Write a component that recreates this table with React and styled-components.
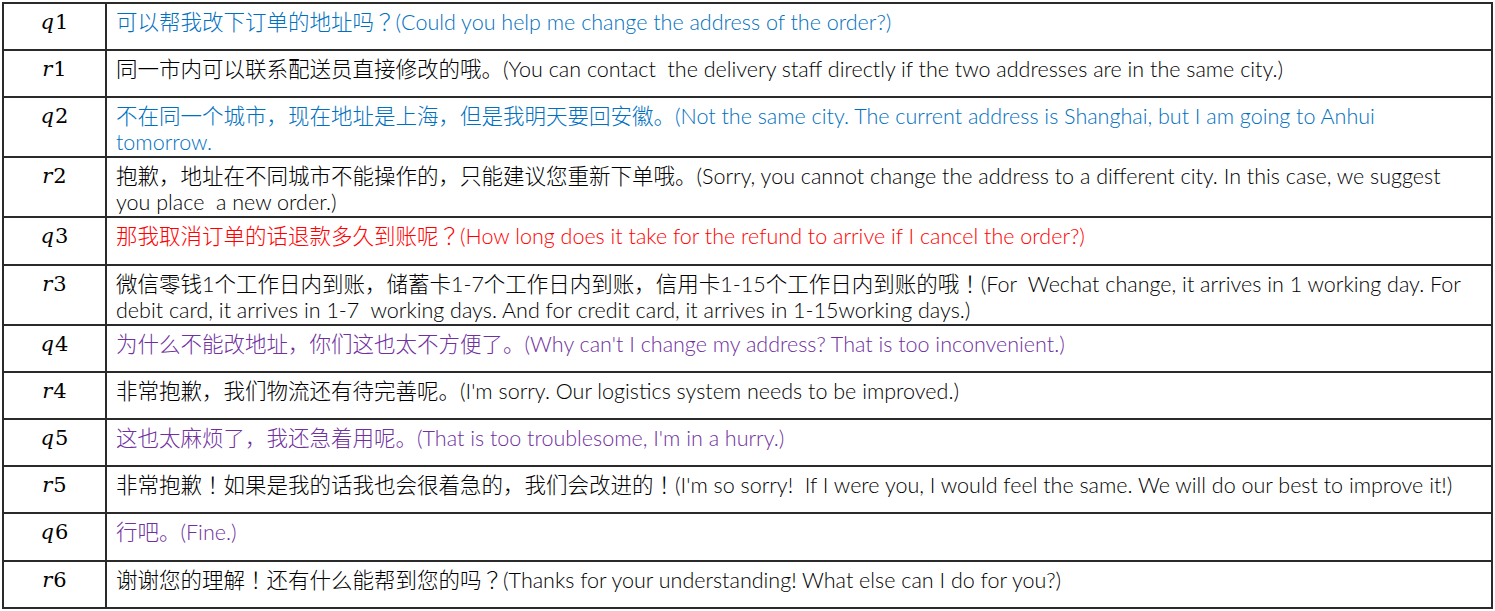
import React from 'react'
import styled, { createGlobalStyle } from 'styled-components'

const GlobalStyle = createGlobalStyle`
  * { box-sizing: border-box; }
  body {
    margin: 0;
    background: #ffffff;
  }
`

const tones = {
  blue: '#0070c0',
  red: '#ff0000',
  purple: '#7030a0',
  plain: '#000000',
}

const dialogue = [
  { speaker: 'q', n: 1, tone: 'blue', text: '可以帮我改下订单的地址吗？(Could you help me change the address of the order?)' },
  { speaker: 'r', n: 1, tone: 'plain', text: '同一市内可以联系配送员直接修改的哦。(You can contact  the delivery staff directly if the two addresses are in the same city.)' },
  { speaker: 'q', n: 2, tone: 'blue', text: '不在同一个城市，现在地址是上海，但是我明天要回安徽。(Not the same city. The current address is Shanghai, but I am going to Anhui\ntomorrow.' },
  { speaker: 'r', n: 2, tone: 'plain', text: '抱歉，地址在不同城市不能操作的，只能建议您重新下单哦。(Sorry, you cannot change the address to a different city. In this case, we suggest\nyou place  a new order.)' },
  { speaker: 'q', n: 3, tone: 'red', text: '那我取消订单的话退款多久到账呢？(How long does it take for the refund to arrive if I cancel the order?)' },
  { speaker: 'r', n: 3, tone: 'plain', text: '微信零钱1个工作日内到账，储蓄卡1-7个工作日内到账，信用卡1-15个工作日内到账的哦！(For  Wechat change, it arrives in 1 working day. For\ndebit card, it arrives in 1-7  working days. And for credit card, it arrives in 1-15working days.)' },
  { speaker: 'q', n: 4, tone: 'purple', text: "为什么不能改地址，你们这也太不方便了。(Why can't I change my address? That is too inconvenient.)" },
  { speaker: 'r', n: 4, tone: 'plain', text: "非常抱歉，我们物流还有待完善呢。(I'm sorry. Our logistics system needs to be improved.)" },
  { speaker: 'q', n: 5, tone: 'purple', text: "这也太麻烦了，我还急着用呢。(That is too troublesome, I'm in a hurry.)" },
  { speaker: 'r', n: 5, tone: 'plain', text: "非常抱歉！如果是我的话我也会很着急的，我们会改进的！(I'm so sorry!  If I were you, I would feel the same. We will do our best to improve it!)" },
  { speaker: 'q', n: 6, tone: 'purple', text: '行吧。(Fine.)' },
  { speaker: 'r', n: 6, tone: 'plain', text: '谢谢您的理解！还有什么能帮到您的吗？(Thanks for your understanding! What else can I do for you?)' },
]

const Page = styled.div`
  padding: 2px 2px 0 2px;
`

const Table = styled.table`
  width: 1491px;
  border-collapse: collapse;
  table-layout: fixed;
  border: 2px solid #2a2a2a;
`

const Row = styled.tr`
  height: 47.2px;
`

const LabelCell = styled.td`
  width: 103px;
  border: 2px solid #2a2a2a;
  padding: 5px 0 1px;
  vertical-align: top;
  text-align: center;
  font-family: "DejaVu Serif", "Liberation Serif", serif;
  font-size: 21px;
  line-height: 26px;
  color: #000;
`

const Var = styled.i`
  font-style: italic;
  margin-right: 1px;
`

const TextCell = styled.td`
  border: 2px solid #2a2a2a;
  padding: 5px 8px 1px 9px;
  vertical-align: top;
  font-family: "Lato", "Noto Sans CJK SC", sans-serif;
  font-size: 21.5px;
  line-height: 26px;
  font-weight: 300;
  white-space: pre;
  color: ${(p) => tones[p.$tone]};
`

// full-width ？ and ！ sit centred in their box in the source
const Punct = styled.span`
  font-family: "Noto Sans CJK JP", "Noto Sans CJK SC", sans-serif;
  line-height: 1;
`

function Utterance({ text }) {
  return text.split(/([？！])/).map((part, i) =>
    part === '？' || part === '！' ? <Punct key={i}>{part}</Punct> : part
  )
}

export default function App() {
  return (
    <Page>
      <GlobalStyle />
      <Table>
        <tbody>
          {dialogue.map((turn) => (
            <Row key={turn.speaker + turn.n}>
              <LabelCell>
                <Var>{turn.speaker}</Var>{turn.n}
              </LabelCell>
              <TextCell $tone={turn.tone}>
                <Utterance text={turn.text} />
              </TextCell>
            </Row>
          ))}
        </tbody>
      </Table>
    </Page>
  )
}
